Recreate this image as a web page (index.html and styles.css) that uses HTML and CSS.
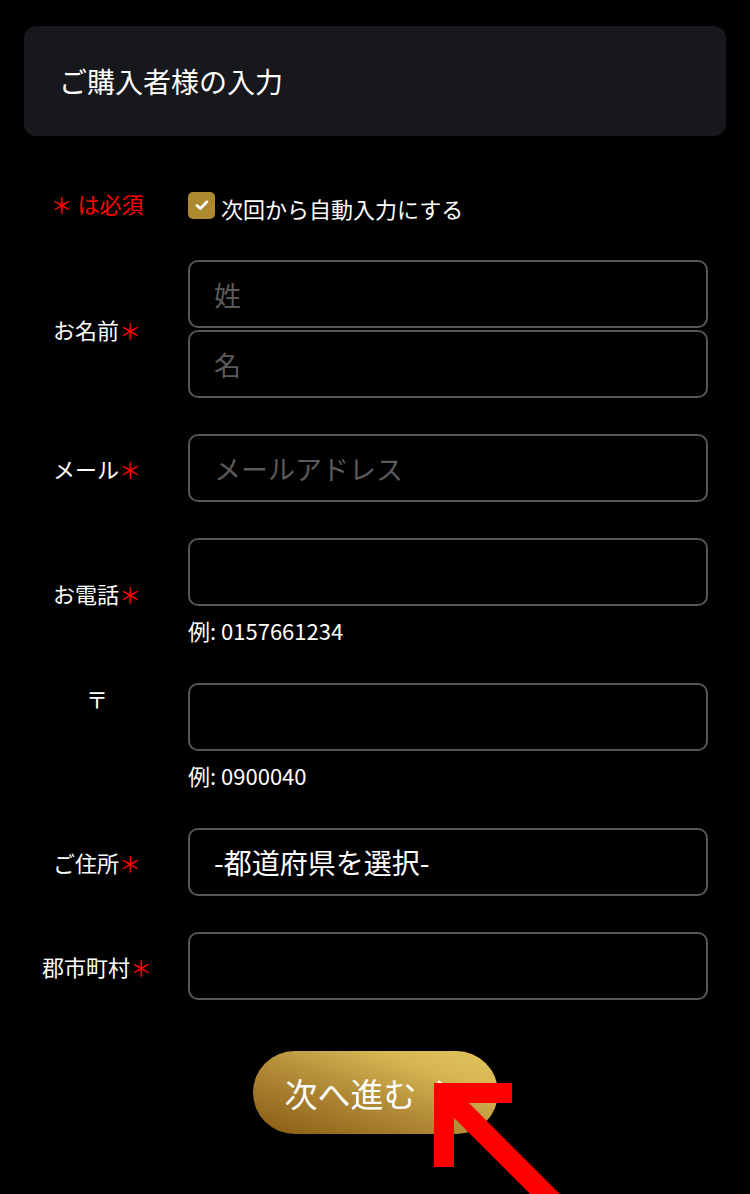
FILE: index.html
```html
<!DOCTYPE html>
<html lang="ja">
<head>
<meta charset="utf-8">
<title>ご購入者様の入力</title>
<link rel="stylesheet" href="styles.css">
</head>
<body>
<div class="page">
  <div class="header-card"><h1 class="title">ご購入者様の入力</h1></div>

  <form class="form">
    <div class="row row-req">
      <div class="label req-note">＊ は必須</div>
      <label class="check">
        <span class="box"><svg viewBox="0 0 16 16" width="16" height="16"><path d="M3 8.4 L6.4 11.6 L13 4.8" fill="none" stroke="#fff" stroke-width="2.8" stroke-linecap="round" stroke-linejoin="round"/></svg></span>
        <span class="check-text">次回から自動入力にする</span>
      </label>
    </div>

    <div class="row">
      <div class="label">お名前<span class="ast">＊</span></div>
      <div class="field stack">
        <input class="input" type="text" placeholder="姓">
        <input class="input" type="text" placeholder="名">
      </div>
    </div>

    <div class="row">
      <div class="label">メール<span class="ast">＊</span></div>
      <div class="field">
        <input class="input" type="email" placeholder="メールアドレス">
      </div>
    </div>

    <div class="row">
      <div class="label">お電話<span class="ast">＊</span></div>
      <div class="field">
        <input class="input" type="tel">
        <div class="hint">例: 0157661234</div>
      </div>
    </div>

    <div class="row">
      <div class="label label-top">〒</div>
      <div class="field">
        <input class="input" type="text">
        <div class="hint">例: 0900040</div>
      </div>
    </div>

    <div class="row">
      <div class="label">ご住所<span class="ast">＊</span></div>
      <div class="field">
        <select class="input select"><option>-都道府県を選択-</option></select>
      </div>
    </div>

    <div class="row">
      <div class="label">郡市町村<span class="ast">＊</span></div>
      <div class="field">
        <input class="input" type="text">
      </div>
    </div>
  </form>

  <div class="actions">
    <button class="next" type="button">
      <span>次へ進む</span>
      <svg class="chev" viewBox="0 0 12 20" width="12" height="20"><path d="M2 2 L10 10 L2 18" fill="none" stroke="#fff" stroke-width="3" stroke-linecap="round" stroke-linejoin="round"/></svg>
    </button>
  </div>

  <svg class="pointer" viewBox="0 0 750 1194" width="750" height="1194">
    <path d="M512 1093 L444 1093 L444 1167" fill="none" stroke="#ff0000" stroke-width="20" stroke-linejoin="miter"/>
    <path d="M448 1097 L560 1209" fill="none" stroke="#ff0000" stroke-width="21"/>
  </svg>
</div>
</body>
</html>
```

FILE: styles.css
```css
* { box-sizing: border-box; }

html, body {
  margin: 0;
  padding: 0;
  background: #000;
}

body {
  font-family: "Noto Sans CJK JP", "Noto Sans", sans-serif;
  color: #fff;
}

.page {
  position: relative;
  width: 750px;
  height: 1194px;
  overflow: hidden;
  padding-top: 26px;
}

.header-card {
  margin: 0 24px;
  height: 110px;
  background: #17181c;
  border-radius: 12px;
  display: flex;
  align-items: center;
  padding-left: 35px;
}

.title {
  margin: 0;
  font-size: 28px;
  font-weight: 400;
  line-height: 1;
  color: #fff;
}

.form {
  margin-top: 50px;
  padding-left: 24px;
  display: flex;
  flex-direction: column;
  gap: 36px;
}

.row {
  display: grid;
  grid-template-columns: 146px 520px;
  column-gap: 18px;
  align-items: center;
}

.row-req {
  height: 38px;
}

.label {
  text-align: center;
  font-size: 22px;
  line-height: 30px;
  color: #fff;
  white-space: nowrap;
}

.label-top {
  align-self: start;
}

.req-note {
  color: #ff0000;
  margin-top: -5px;
}

.ast {
  color: #ff0000;
}

.check {
  display: flex;
  align-items: center;
  gap: 6px;
  font-size: 22px;
  line-height: 30px;
  color: #fff;
}

.check-text {
  padding-top: 5px;
}

.box {
  width: 27px;
  height: 27px;
  border-radius: 5px;
  background: #ad8a2f;
  display: flex;
  align-items: center;
  justify-content: center;
}

.field {
  display: flex;
  flex-direction: column;
}

.stack {
  gap: 2px;
}

.input {
  flex: none;
  width: 520px;
  height: 68px;
  border: 2px solid #575757;
  border-radius: 10px;
  background: #000;
  color: #fff;
  padding: 0 24px;
  font-family: "Noto Sans CJK JP", "Noto Sans", sans-serif;
  font-size: 27px;
  outline: none;
}

.input::placeholder {
  color: #5a5a5a;
}

.select {
  appearance: none;
  -webkit-appearance: none;
  font-size: 28px;
  padding-left: 24px;
}

.hint {
  margin-top: 8px;
  font-size: 22px;
  line-height: 33px;
  color: #fff;
}

.actions {
  margin-top: 51px;
  display: flex;
  justify-content: center;
}

.next {
  width: 245px;
  height: 83px;
  border: none;
  border-radius: 42px;
  background: linear-gradient(to top right, #875b12 0%, #b38c38 45%, #d6b653 75%, #e2c55f 100%);
  color: #fff;
  font-family: "Noto Sans CJK JP", "Noto Sans", sans-serif;
  font-size: 33px;
  display: flex;
  align-items: center;
  justify-content: flex-start;
  gap: 20px;
  padding: 0 0 0 32px;
}

.chev {
  margin-top: -6px;
}

.pointer {
  position: absolute;
  left: 0;
  top: 0;
  pointer-events: none;
}
```
